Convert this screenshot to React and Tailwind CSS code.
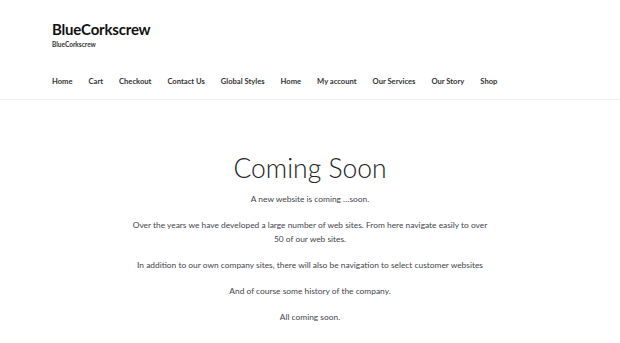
const navItems = [
  'Home',
  'Cart',
  'Checkout',
  'Contact Us',
  'Global Styles',
  'Home',
  'My account',
  'Our Services',
  'Our Story',
  'Shop',
];

export default function App() {
  return (
    <div className="min-h-[343px] bg-white font-['Lato',_sans-serif] text-[#333333]">
      <header className="border-b border-[#f0f0f0]">
        <div className="px-[52px] pt-[20px]">
          <h1 className="text-[15px] font-bold leading-[18px] tracking-[-0.2px] text-[#111]">BlueCorkscrew</h1>
          <p className="mt-[2px] text-[6.5px] font-bold leading-[10px] text-[#333]">BlueCorkscrew</p>
          <nav className="mt-[25px] flex h-[24px] items-start gap-[16px]">
            {navItems.map((item, i) => (
              <a key={i} href="#" className="text-[7.6px] font-bold leading-[12px] text-[#333]">
                {item}
              </a>
            ))}
          </nav>
        </div>
      </header>
      <main className="flex flex-col items-center pt-[52px] text-center">
        <h2 className="text-[26.5px] font-light leading-[32px] text-[#222]">Coming Soon</h2>
        <div className="mt-[8px] flex max-w-[356px] flex-col gap-[12px] text-[8.4px] leading-[14px] text-[#43454b]">
          <p>A new website is coming …soon.</p>
          <p>Over the years we have developed a large number of web sites. From here navigate easily to over 50 of our web sites.</p>
          <p className="whitespace-nowrap">In addition to our own company sites, there will also be navigation to select customer websites</p>
          <p>And of course some history of the company.</p>
          <p>All coming soon.</p>
        </div>
      </main>
    </div>
  );
}
